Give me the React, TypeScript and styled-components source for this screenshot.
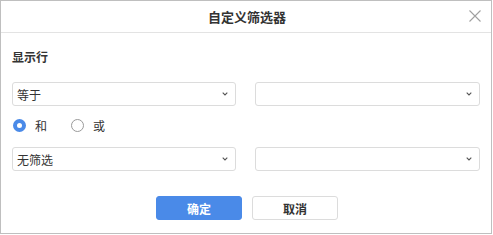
import React from 'react'
import styled, { createGlobalStyle } from 'styled-components'

const GlobalStyle = createGlobalStyle`
	html, body {
		margin: 0;
		padding: 0;
		background: #ffffff;
	}
	body {
		font-family: "Noto Sans CJK SC", "Noto Sans", sans-serif;
		color: #333333;
	}
`

const Dialog = styled.div`
	box-sizing: border-box;
	width: 492px;
	height: 234px;
	border: 1px solid #bfbfbf;
	background: #ffffff;
	display: flex;
	flex-direction: column;
`

const Header = styled.div`
	position: relative;
	height: 31px;
	border-bottom: 1px solid #e3e3e3;
	display: flex;
	align-items: center;
	justify-content: center;
`

const Title = styled.div`
	font-size: 13px;
	font-weight: 700;
	color: #333333;
	line-height: 20px;
	margin-left: 2px;
`

const Close = styled.button`
	position: absolute;
	right: 10px;
	top: 9px;
	width: 12px;
	height: 12px;
	padding: 0;
	border: none;
	background: none;
	display: flex;
`

const Body = styled.div`
	padding: 14px 11px 0 11px;
	display: flex;
	flex-direction: column;
`

const Label = styled.div`
	font-size: 12px;
	font-weight: 700;
	line-height: 20px;
	height: 20px;
`

const Row = styled.div<{ $top: number }>`
	display: grid;
	grid-template-columns: 224px 225px;
	column-gap: 19px;
	margin-top: ${({ $top }) => $top}px;
`

const Select = styled.div`
	box-sizing: border-box;
	height: 24px;
	border: 1px solid #dcdcdc;
	border-radius: 3px;
	display: flex;
	align-items: center;
	justify-content: space-between;
	padding: 0 7px 0 4px;
	font-size: 12px;
	color: #333333;
`

const RadioRow = styled.div`
	display: flex;
	align-items: center;
	height: 24px;
	margin-top: 7px;
	margin-bottom: 1px;
	padding-left: 1px;
`

const RadioItem = styled.label`
	display: flex;
	align-items: center;
	font-size: 12px;
	margin-right: 24px;
`

const RadioDot = styled.span<{ $checked?: boolean }>`
	box-sizing: border-box;
	width: 13px;
	height: 13px;
	border-radius: 50%;
	margin-right: 9px;
	border: ${({ $checked }) => ($checked ? '4px solid #4a8ae8' : '1px solid #9a9a9a')};
	background: #ffffff;
`

const Footer = styled.div`
	display: flex;
	justify-content: center;
	gap: 10px;
	margin-top: 25px;
	padding-left: 2px;
`

const Button = styled.button<{ $primary?: boolean }>`
	box-sizing: border-box;
	width: 86px;
	height: 24px;
	border-radius: 3px;
	font-family: inherit;
	font-size: 12px;
	font-weight: 700;
	border: 1px solid ${({ $primary }) => ($primary ? '#4a8ae8' : '#dcdcdc')};
	background: ${({ $primary }) => ($primary ? '#4a8ae8' : '#ffffff')};
	color: ${({ $primary }) => ($primary ? '#ffffff' : '#333333')};
	padding: 0;
`

const Chevron = () => (
	<svg width="6" height="4" viewBox="0 0 6 4">
		<path d="M0.7 0.7 L3 3 L5.3 0.7" fill="none" stroke="#555" strokeWidth="1.1" />
	</svg>
)

const Dropdown: React.FC<{ value?: string }> = ({ value }) => (
	<Select>
		<span>{value}</span>
		<Chevron />
	</Select>
)

export default function App() {
	return (
		<>
			<GlobalStyle />
			<Dialog>
				<Header>
					<Title>自定义筛选器</Title>
					<Close>
						<svg width="12" height="12" viewBox="0 0 12 12">
							<path d="M0.5 0.5 L11.5 11.5 M11.5 0.5 L0.5 11.5" stroke="#a0a0a0" strokeWidth="1.1" />
						</svg>
					</Close>
				</Header>
				<Body>
					<Label>显示行</Label>
					<Row $top={15}>
						<Dropdown value="等于" />
						<Dropdown />
					</Row>
					<RadioRow>
						<RadioItem>
							<RadioDot $checked />和
						</RadioItem>
						<RadioItem>
							<RadioDot />或
						</RadioItem>
					</RadioRow>
					<Row $top={9}>
						<Dropdown value="无筛选" />
						<Dropdown />
					</Row>
					<Footer>
						<Button $primary>确定</Button>
						<Button>取消</Button>
					</Footer>
				</Body>
			</Dialog>
		</>
	)
}
